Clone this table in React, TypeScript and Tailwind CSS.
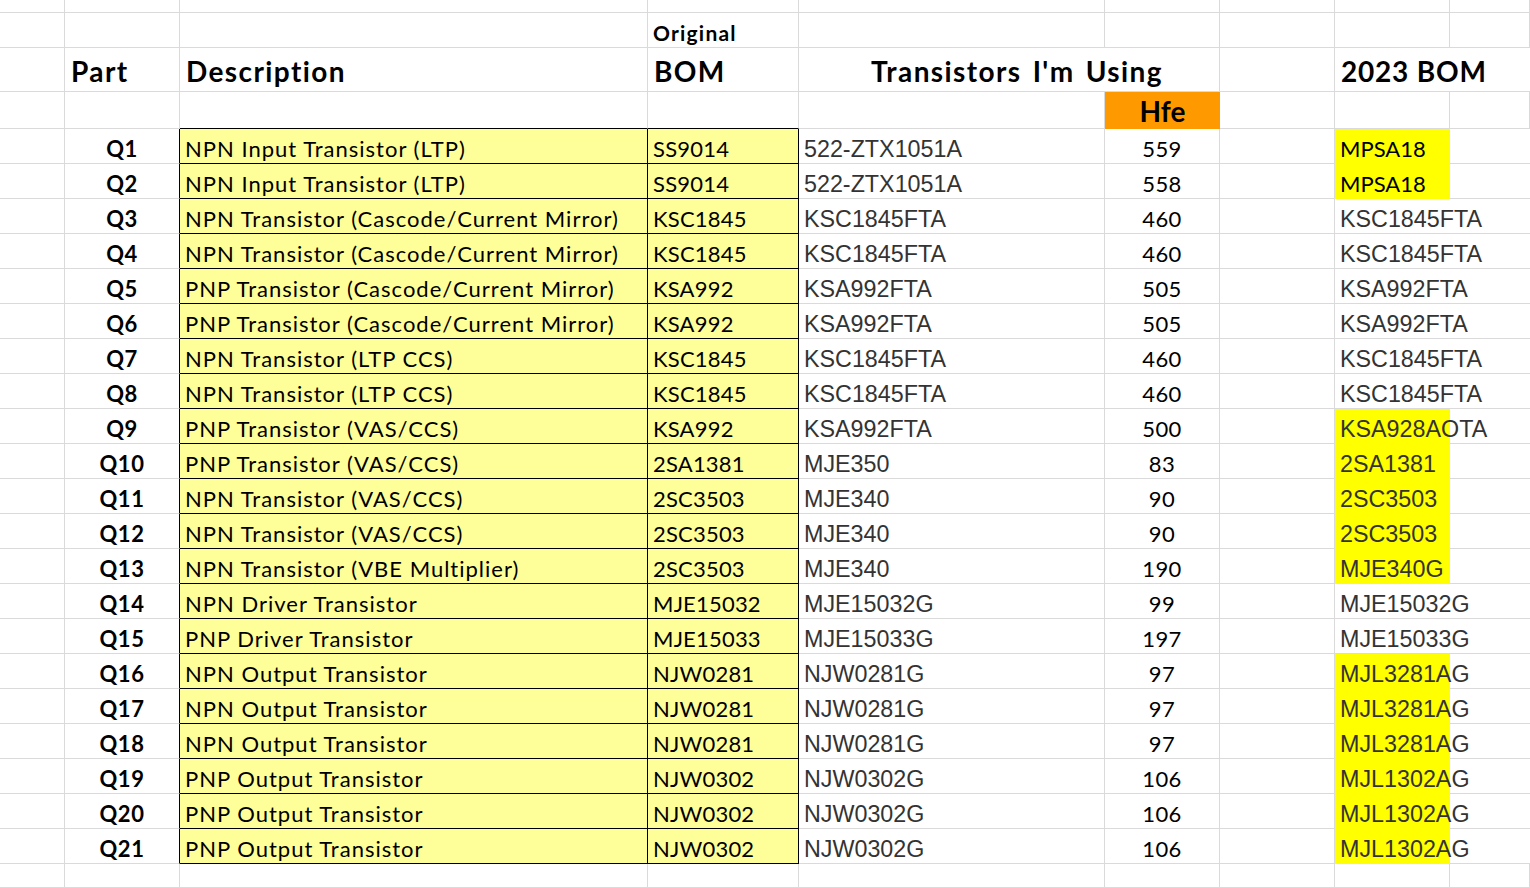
import React from "react";

const grid = "grid grid-cols-[65px_115px_468px_151px_306px_115px_115px_115px_1fr]";
const gray = "border-r border-b border-[#dadada]";
const cal = "font-['Lato','Liberation_Sans',sans-serif]";
const ari = "font-['Liberation_Sans','Arial',sans-serif]";

type Row = { q: string; desc: string; bom: string; used: string; hfe: number; now: string; hi?: boolean; cal?: boolean };

const rows: Row[] = [
  { q: "Q1", desc: "NPN Input Transistor (LTP)", bom: "SS9014", used: "522-ZTX1051A", hfe: 559, now: "MPSA18", hi: true, cal: true },
  { q: "Q2", desc: "NPN Input Transistor (LTP)", bom: "SS9014", used: "522-ZTX1051A", hfe: 558, now: "MPSA18", hi: true, cal: true },
  { q: "Q3", desc: "NPN Transistor (Cascode/Current Mirror)", bom: "KSC1845", used: "KSC1845FTA", hfe: 460, now: "KSC1845FTA" },
  { q: "Q4", desc: "NPN Transistor (Cascode/Current Mirror)", bom: "KSC1845", used: "KSC1845FTA", hfe: 460, now: "KSC1845FTA" },
  { q: "Q5", desc: "PNP Transistor (Cascode/Current Mirror)", bom: "KSA992", used: "KSA992FTA", hfe: 505, now: "KSA992FTA" },
  { q: "Q6", desc: "PNP Transistor (Cascode/Current Mirror)", bom: "KSA992", used: "KSA992FTA", hfe: 505, now: "KSA992FTA" },
  { q: "Q7", desc: "NPN Transistor (LTP CCS)", bom: "KSC1845", used: "KSC1845FTA", hfe: 460, now: "KSC1845FTA" },
  { q: "Q8", desc: "NPN Transistor (LTP CCS)", bom: "KSC1845", used: "KSC1845FTA", hfe: 460, now: "KSC1845FTA" },
  { q: "Q9", desc: "PNP Transistor (VAS/CCS)", bom: "KSA992", used: "KSA992FTA", hfe: 500, now: "KSA928AOTA", hi: true },
  { q: "Q10", desc: "PNP Transistor (VAS/CCS)", bom: "2SA1381", used: "MJE350", hfe: 83, now: "2SA1381", hi: true },
  { q: "Q11", desc: "NPN Transistor (VAS/CCS)", bom: "2SC3503", used: "MJE340", hfe: 90, now: "2SC3503", hi: true },
  { q: "Q12", desc: "NPN Transistor (VAS/CCS)", bom: "2SC3503", used: "MJE340", hfe: 90, now: "2SC3503", hi: true },
  { q: "Q13", desc: "NPN Transistor (VBE Multiplier)", bom: "2SC3503", used: "MJE340", hfe: 190, now: "MJE340G", hi: true },
  { q: "Q14", desc: "NPN Driver Transistor", bom: "MJE15032", used: "MJE15032G", hfe: 99, now: "MJE15032G" },
  { q: "Q15", desc: "PNP Driver Transistor", bom: "MJE15033", used: "MJE15033G", hfe: 197, now: "MJE15033G" },
  { q: "Q16", desc: "NPN Output Transistor", bom: "NJW0281", used: "NJW0281G", hfe: 97, now: "MJL3281AG", hi: true },
  { q: "Q17", desc: "NPN Output Transistor", bom: "NJW0281", used: "NJW0281G", hfe: 97, now: "MJL3281AG", hi: true },
  { q: "Q18", desc: "NPN Output Transistor", bom: "NJW0281", used: "NJW0281G", hfe: 97, now: "MJL3281AG", hi: true },
  { q: "Q19", desc: "PNP Output Transistor", bom: "NJW0302", used: "NJW0302G", hfe: 106, now: "MJL1302AG", hi: true },
  { q: "Q20", desc: "PNP Output Transistor", bom: "NJW0302", used: "NJW0302G", hfe: 106, now: "MJL1302AG", hi: true },
  { q: "Q21", desc: "PNP Output Transistor", bom: "NJW0302", used: "NJW0302G", hfe: 106, now: "MJL1302AG", hi: true },
];

const EmptyRow = ({ h }: { h: string }) => (
  <div className={`${grid} ${h}`}>
    {Array.from({ length: 9 }).map((_, i) => (
      <div key={i} className={gray} />
    ))}
  </div>
);

export default function App() {
  return (
    <div className={`w-[1530px] h-[888px] overflow-hidden bg-white text-black ${cal}`}>
      <EmptyRow h="h-[13px]" />

      {/* "Original" row */}
      <div className={`${grid} h-[35px]`}>
        <div className={gray} />
        <div className={gray} />
        <div className={gray} />
        <div className={`${gray} flex items-end pl-[5px] pb-[4px] text-[21px] font-bold leading-none tracking-[1.2px]`}>Original</div>
        <div className={gray} />
        <div className={gray} />
        <div className={gray} />
        <div className={gray} />
        <div className={gray} />
      </div>

      {/* header row */}
      <div className={`${grid} h-[44px] text-[28px] font-bold leading-none tracking-[1.4px]`}>
        <div className={gray} />
        <div className={`${gray} flex items-end pl-[6px] pb-[6px]`}>Part</div>
        <div className={`${gray} flex items-end pl-[6px] pb-[6px]`}>Description</div>
        <div className={`${gray} flex items-end pl-[6px] pb-[6px]`}>BOM</div>
        <div className={`${gray} col-span-2 flex items-end pl-[72px] pb-[6px] whitespace-nowrap [word-spacing:3px]`}>Transistors I'm Using</div>
        <div className={gray} />
        <div className="border-b border-[#dadada] col-span-2 flex items-end pl-[6px] pb-[6px] whitespace-nowrap tracking-[0.8px]">2023 BOM</div>
      </div>

      {/* hfe row */}
      <div className={`${grid} h-[37px]`}>
        <div className={gray} />
        <div className={gray} />
        <div className="border-r border-b border-r-[#dadada] border-b-black" />
        <div className="border-r border-b border-r-[#dadada] border-b-black" />
        <div className={gray} />
        <div className="bg-[#ff9900] flex items-end justify-center pb-[4px] text-[28px] font-bold leading-none">Hfe</div>
        <div className={gray} />
        <div className={gray} />
        <div className={gray} />
      </div>

      {rows.map((r) => (
        <div key={r.q} className={`${grid} h-[35px] text-[22px] leading-none`}>
          <div className={gray} />
          <div className="border-r border-b border-r-black border-b-[#dadada] flex items-end justify-center pb-[3px] font-bold tracking-[0.6px]">{r.q}</div>
          <div className="bg-[#ffff99] border-r border-b border-black flex items-end pl-[5px] pb-[3px] whitespace-nowrap tracking-[1px]">{r.desc}</div>
          <div className="bg-[#ffff99] border-r border-b border-black flex items-end pl-[5px] pb-[3px] tracking-[0.2px]">{r.bom}</div>
          <div className={`${gray} ${ari} text-[23.3px] text-[#333] flex items-end pl-[5px] pb-[2px]`}>{r.used}</div>
          <div className={`${gray} flex items-end justify-center pb-[3px] tracking-[0.4px]`}>{r.hfe}</div>
          <div className={gray} />
          <div
            className={`border-b flex items-end pl-[5px] whitespace-nowrap ${
              r.hi ? "bg-[#ffff00] border-[#ffff00]" : "border-[#dadada]"
            } ${r.cal ? "pb-[3px]" : `${ari} text-[23.3px] text-[#333] pb-[2px]`}`}
          >
            <span className="relative z-10">{r.now}</span>
          </div>
          <div className="border-b border-[#dadada]" />
        </div>
      ))}

      <EmptyRow h="h-[24px]" />
    </div>
  );
}
